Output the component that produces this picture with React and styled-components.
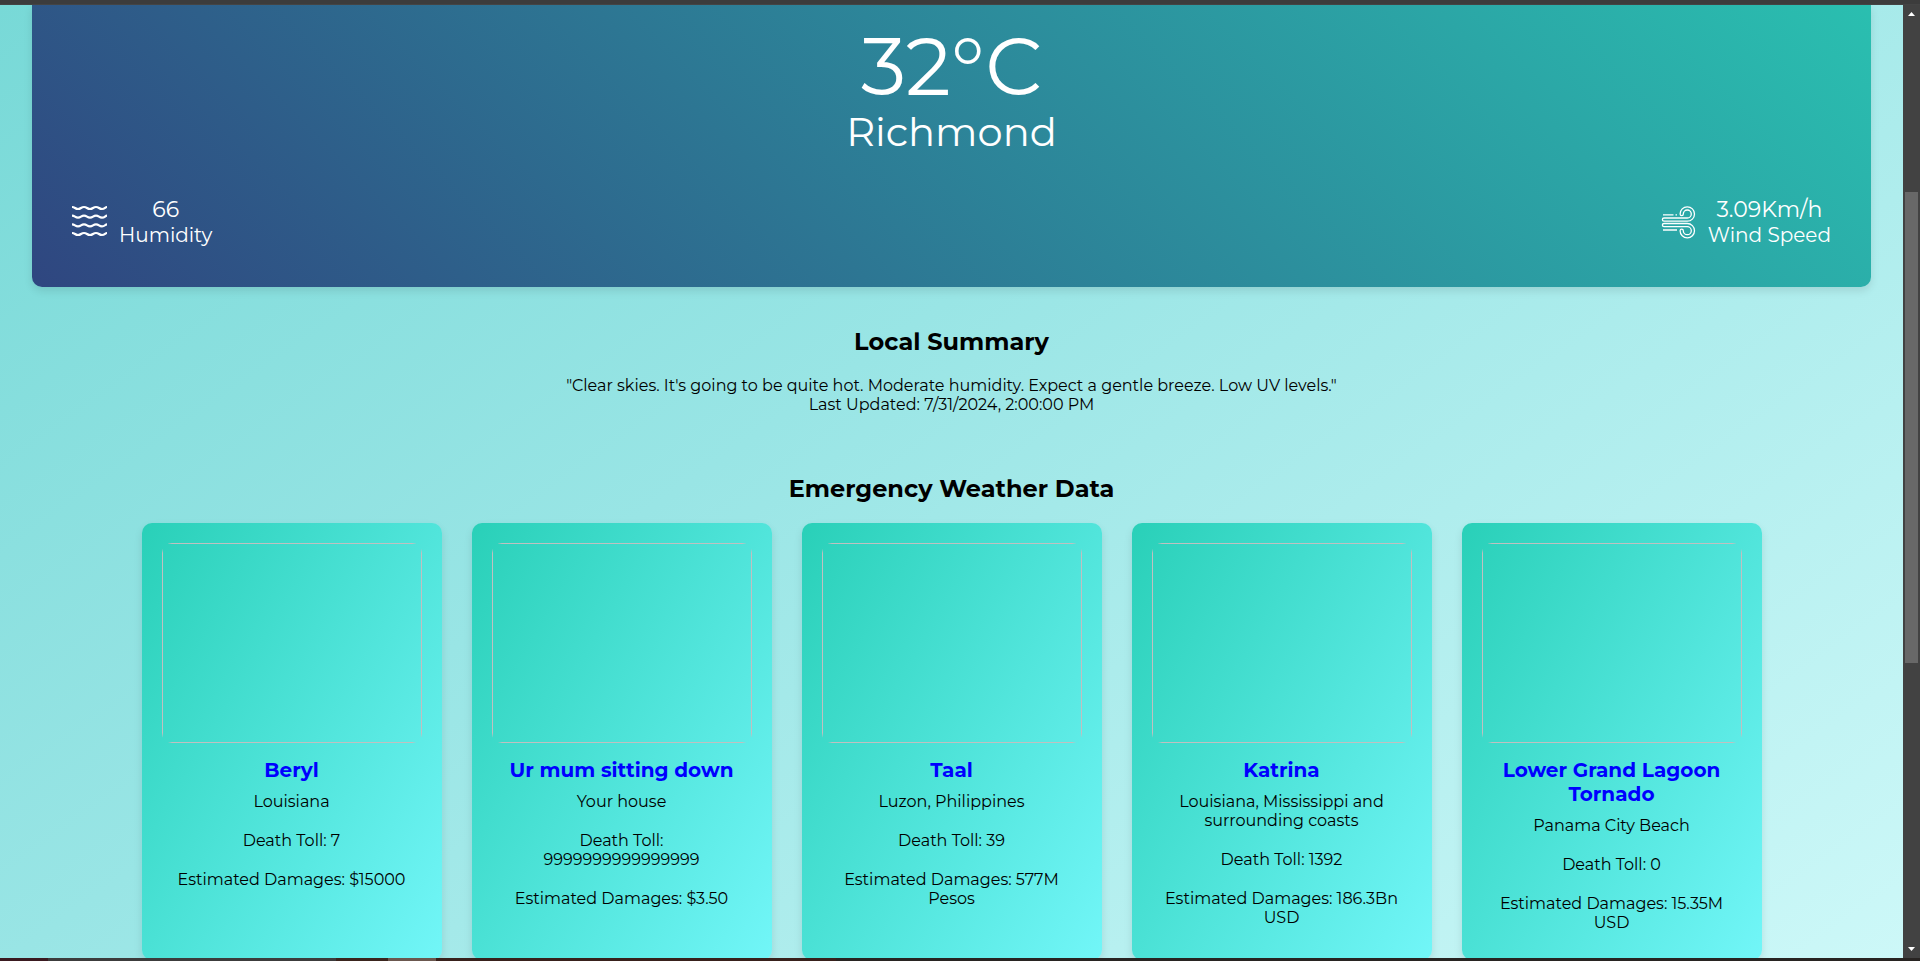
import React from 'react';
import styled, { createGlobalStyle } from 'styled-components';

const Global = createGlobalStyle`
  *, *::before { box-sizing: border-box; }
  body { margin: 0; background: #3c3c3c; }
  h2, h3, p { margin: 0; font-weight: 400; }
`;

const Window = styled.div`
  height: 100vh;
  display: flex;
  flex-direction: column;
  overflow: hidden;
  font-family: Montserrat, Inter, "DejaVu Sans", sans-serif;
  color: #000;
`;
const TopEdge = styled.div`
  flex: none;
  height: 5px;
  background: #3c3c3c;
  border-bottom: 1px solid #444;
`;
const Viewport = styled.div`
  flex: 1;
  min-height: 0;
  display: flex;
`;
const Page = styled.main`
  flex: 1;
  min-width: 0;
  overflow: hidden;
  padding: 0 32px;
  text-align: center;
  background: linear-gradient(145deg, #78d9d7, #99e5e5 42%, #cdf8f8);
`;
const Hero = styled.section`
  height: 282px;
  padding: 17px 40px 40px;
  display: flex;
  flex-direction: column;
  align-items: center;
  color: #fff;
  border-radius: 0 0 10px 10px;
  background: linear-gradient(45deg, #2f4680, #2abfb0);
  box-shadow: 0 4px 8px rgba(0, 0, 0, 0.1);
`;
const Temperature = styled.p`
  font-size: 80px;
  line-height: 90px;
`;
const City = styled.p`
  font-size: 40px;
  line-height: 40px;
`;
const Stats = styled.div`
  align-self: stretch;
  margin-top: auto;
  display: flex;
  justify-content: space-between;
`;
const Stat = styled.div`
  display: flex;
  align-items: center;
  gap: 12px;
  svg { display: block; }
`;
const StatValue = styled.p`
  font-size: 22px;
  line-height: 27px;
`;
const StatLabel = styled.p`
  font-size: 20px;
  line-height: 24px;
`;
const Summary = styled.section`
  padding-top: 40px;
`;
const Heading = styled.h2`
  font-size: 24px;
  line-height: 30px;
  font-weight: 700;
`;
const SummaryText = styled.p`
  margin-top: 19px;
  font-size: 16px;
  line-height: 19px;
`;
const Emergency = styled.section`
  padding-top: 60px;
`;
const Cards = styled.div`
  margin-top: 19px;
  display: flex;
  justify-content: center;
  gap: 30px;
`;
const Card = styled.article`
  flex: 0 0 300px;
  height: 437px;
  padding: 20px;
  border-radius: 10px;
  background: linear-gradient(120deg, #29d0b8, #72f6f8);
  box-shadow: 0 4px 8px rgba(0, 0, 0, 0.1);
`;
const Photo = styled.div`
  height: 200px;
  border-radius: 10px;
  overflow: hidden;
  &::before {
    content: "";
    display: block;
    height: 100%;
    border: 1px solid #c0c0c0;
  }
`;
const CardTitle = styled.h3`
  margin: 15px 0 10px;
  font-size: 20px;
  line-height: 24px;
  font-weight: 700;
  a { color: #00f; text-decoration: none; }
`;
const Details = styled.div`
  display: flex;
  flex-direction: column;
  gap: 20px;
  padding: 0 10px;
  font-size: 16px;
  line-height: 19px;
`;
const ScrollBar = styled.div`
  flex: none;
  width: 17px;
  padding: 7px 2px;
  display: flex;
  flex-direction: column;
  align-items: center;
  justify-content: space-between;
  background: #424242;
`;
const Track = styled.div`
  flex: 1;
  align-self: stretch;
  display: flex;
  flex-direction: column;
`;
const TrackSpace = styled.div`
  flex: ${(p) => p.$grow};
`;
const Thumb = styled.div`
  flex: 471;
  width: 13px;
  background: #686868;
`;
const BottomEdge = styled.div`
  flex: none;
  height: 3px;
  display: flex;
  background: #282422;
`;
const TaskPart = styled.div`
  width: ${(p) => p.$width};
  background: ${(p) => p.$color};
`;

const wave = (y) => `M0 ${y}c3 0 3 2 6 2s3-2 6-2 3 2 6 2 3-2 6-2 3 2 6 2 3-2 5-2`;
const HumidityIcon = () => (
  <svg width="35" height="35" viewBox="0 0 35 35" fill="none" stroke="#fff" strokeWidth="2.2" aria-hidden="true">
    <path d={wave(3)} /><path d={wave(11.7)} /><path d={wave(20.4)} /><path d={wave(29)} />
  </svg>
);
const tube = 'M3 17.2H26.3a7.2 7.2 0 1 0-7.2-7.2a1.6 1.6 0 0 0 3.2 0a4 4 0 1 1 4 4H3a1.6 1.6 0 0 0 0 3.2z';
const WindIcon = () => (
  <svg width="35" height="35" viewBox="0 0 35 35" fill="none" stroke="#fff" strokeWidth="1.3" aria-hidden="true">
    <path d={tube} />
    <path d={tube} transform="matrix(1 0 0 -1 0 36.7)" />
    <path d="M2 10.8h10.5M14.5 10.8h1.5M2 26h14" />
  </svg>
);
const Arrow = ({ down }) => (
  <svg width="7" height="4" viewBox="0 0 7 4" aria-hidden="true">
    <path d={down ? 'M0 0h7L3.5 4z' : 'M0 4h7L3.5 0z'} fill="#fff" />
  </svg>
);

const events = [
  ['Beryl', 'Louisiana', '7', '$15000'],
  ['Ur mum sitting down', 'Your house', '9999999999999999', '$3.50'],
  ['Taal', 'Luzon, Philippines', '39', '577M Pesos'],
  ['Katrina', 'Louisiana, Mississippi and surrounding coasts', '1392', '186.3Bn USD'],
  ['Lower Grand Lagoon Tornado', 'Panama City Beach', '0', '15.35M USD'],
];

export default function App() {
  return (
    <Window>
      <Global />
      <TopEdge />
      <Viewport>
        <Page>
          <Hero>
            <Temperature>32°C</Temperature>
            <City>Richmond</City>
            <Stats>
              <Stat>
                <HumidityIcon />
                <div><StatValue>66</StatValue><StatLabel>Humidity</StatLabel></div>
              </Stat>
              <Stat>
                <WindIcon />
                <div><StatValue>3.09Km/h</StatValue><StatLabel>Wind Speed</StatLabel></div>
              </Stat>
            </Stats>
          </Hero>
          <Summary>
            <Heading>Local Summary</Heading>
            <SummaryText>
              "Clear skies. It's going to be quite hot. Moderate humidity. Expect a gentle breeze. Low UV levels."
              <br />
              Last Updated: 7/31/2024, 2:00:00 PM
            </SummaryText>
          </Summary>
          <Emergency>
            <Heading>Emergency Weather Data</Heading>
            <Cards>
              {events.map(([name, place, toll, damages]) => (
                <Card key={name}>
                  <Photo />
                  <CardTitle><a href="#">{name}</a></CardTitle>
                  <Details>
                    <p>{place}</p>
                    <p>Death Toll: {toll}</p>
                    <p>Estimated Damages: {damages}</p>
                  </Details>
                </Card>
              ))}
            </Cards>
          </Emergency>
        </Page>
        <ScrollBar>
          <Arrow />
          <Track><TrackSpace $grow={176} /><Thumb /><TrackSpace $grow={284} /></Track>
          <Arrow down />
        </ScrollBar>
      </Viewport>
      <BottomEdge>
        <TaskPart $width="48px" $color="#3a1a20" />
        <TaskPart $width="288px" $color="#3c3c3c" />
        <TaskPart $width="52px" $color="#3a251e" />
        <TaskPart $width="48px" $color="#6b584f" />
        <TaskPart $width="400px" $color="#38211c" />
      </BottomEdge>
    </Window>
  );
}
